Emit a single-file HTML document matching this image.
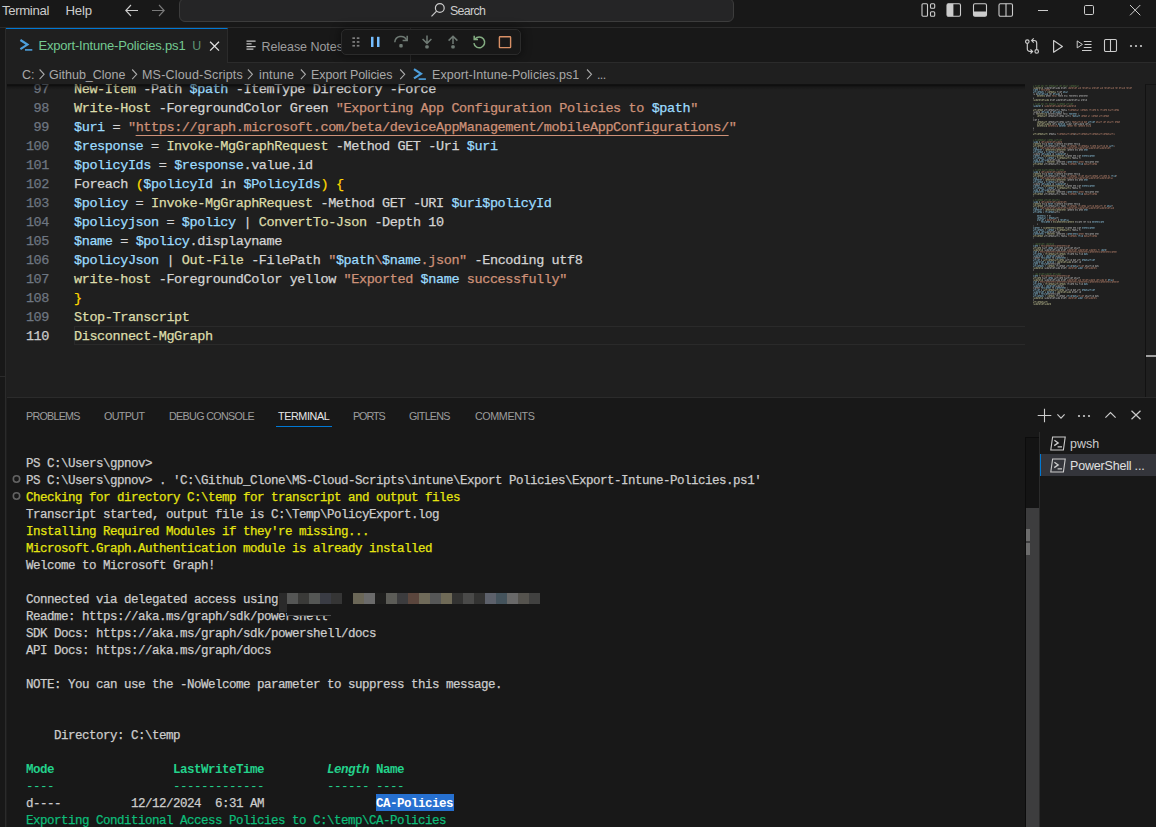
<!DOCTYPE html>
<html lang="en">
<head>
<meta charset="utf-8">
<title>Export-Intune-Policies.ps1 - Visual Studio Code</title>
<style>
*{box-sizing:border-box;margin:0;padding:0}
html,body{width:1156px;height:827px;overflow:hidden;background:#1f1f1f}
body{position:relative;font-family:"Liberation Sans",sans-serif;font-size:13px;color:#cccccc}
.abs{position:absolute}
svg{display:block;position:absolute;overflow:visible}
/* title bar */
#title{left:0;top:0;width:1156px;height:28px;background:#181818;border-bottom:1px solid #2b2b2b}
#title .menu{position:absolute;top:2.6px;font-size:13.2px;color:#cccccc;line-height:16px;white-space:nowrap}
#search{left:179px;top:-2px;width:555px;height:24px;border:1px solid #3c3c3c;border-radius:6px;background:#252526}
#search span{position:absolute;left:270px;top:4.5px;font-size:12.4px;color:#cccccc;line-height:14px}
/* left strip */
#strip{left:0;top:28px;width:6px;height:799px;background:#181818;border-right:1px solid #2b2b2b}
/* tabs */
#tabs{left:6px;top:28px;width:1150px;height:35px;background:#181818;border-bottom:1px solid #2b2b2b}
#tab1{left:0;top:0;width:222px;height:35px;background:#1f1f1f;border-top:1px solid #0078d4;border-right:1px solid #2b2b2b}
#tab1 .lbl{position:absolute;left:32.4px;top:9px;font-size:13px;line-height:16px;color:#73c991;white-space:nowrap}
#tab1 .u{position:absolute;left:186.2px;top:9px;font-size:12.4px;line-height:16px;color:#5d9474}
#tab2{left:222px;top:0;width:183px;height:34px;border-right:1px solid #2b2b2b}
#tab2 .lbl{position:absolute;left:33.5px;top:11px;font-size:12.5px;line-height:16px;color:#9d9d9d;white-space:nowrap}
#dbg{left:335px;top:1px;width:180px;height:26px;background:#181818;border:1px solid #2b2b2b;border-radius:5px;box-shadow:0 0 8px 2px rgba(0,0,0,.36)}
/* breadcrumbs */
#crumbs{left:7px;top:63px;width:1149px;height:21px;background:#1f1f1f;font-size:12.5px;color:#a9a9a9;white-space:nowrap}
#crumbs span{position:absolute;top:4px;line-height:16px}
#crumbs .chev{fill:none;stroke:#a9a9a9;stroke-width:1.1}
/* editor */
#editor{left:7px;top:84px;width:1149px;height:314px;background:#1f1f1f;overflow:hidden}
#editor .ln{position:absolute;left:0;width:42px;text-align:right;font-family:"Liberation Mono",monospace;font-size:13.5px;line-height:19px;color:#6e7681;letter-spacing:-0.4px}
#editor .cl{position:absolute;left:67px;font-family:"Liberation Mono",monospace;font-size:13.5px;line-height:19px;color:#d4d4d4;white-space:pre;letter-spacing:-0.4px}
.f{color:#dcdcaa}.v{color:#9cdcfe}.s{color:#ce9178}.b{color:#ffd700}
/* panel */
#panel{left:7px;top:397px;width:1149px;height:430px;background:#181818;border-top:1px solid #2b2b2b}
#panel .pt{position:absolute;top:11px;font-size:10.75px;line-height:14px;color:#9d9d9d;white-space:nowrap}
#term{position:absolute;z-index:0;left:19px;top:58px;font-family:"Liberation Mono",monospace;font-size:12.5px;line-height:17px;color:#cccccc;letter-spacing:-0.5px}
#term div{height:17px;white-space:pre}
.y{color:#e5e510}.g{color:#23d18b}.gn{color:#0dbc79}
#m1{letter-spacing:-0.36px}
#m2{letter-spacing:-0.16px}
#srch{letter-spacing:-0.68px}
#c3{letter-spacing:0.19px}
#c4{letter-spacing:0.16px}
#c5{letter-spacing:-0.09px}
#c6{letter-spacing:0.05px}
#c7{letter-spacing:-0.6px}
#p1{letter-spacing:-0.76px}
#p2{letter-spacing:-0.63px}
#p3{letter-spacing:-0.68px}
#p4{letter-spacing:-0.38px}
#p5{letter-spacing:-1.07px}
#p6{letter-spacing:-0.76px}
#p7{letter-spacing:-0.41px}
#t1{letter-spacing:-0.18px}
#t2{letter-spacing:-0.05px}
#blur i{position:absolute;top:0;width:11px;height:11px}
#blur b{position:absolute;display:block}
#tlist .row{position:absolute;left:0;width:116px;height:22px}
#tlist .row.sel{background:#34353b;border-left:1px solid #0078d4;left:0}
#tlist .row svg{left:10px;top:4px}
#tlist .row.sel svg{left:9px}
#tlist .row span{position:absolute;left:30px;top:4px;font-size:12.5px;line-height:16px;color:#cccccc;white-space:nowrap}
#tlist .row.sel span{left:29px;color:#e0e0e0}
.sel{}
#term .sel{position:relative;color:#ffffff;font-weight:bold}
#term .sel::before{content:"";position:absolute;left:0;right:-0.5px;top:-3.4px;height:17px;background:#2670d0;z-index:-1}
#term .g{font-weight:bold}
#curline{left:67px;top:242px;width:951px;height:19px;border:1px solid #2a2a2a;border-right:none}
#shadow{left:0;top:0;width:1018px;height:6px;background:linear-gradient(rgba(0,0,0,.3),rgba(0,0,0,.6) 1px,rgba(0,0,0,.25) 3px,rgba(0,0,0,0));z-index:5}
#editor .ln.cur{color:#cccccc}
.lk{text-decoration:underline;text-underline-offset:4px;text-decoration-thickness:1px}
#tl2{letter-spacing:-0.19px}
#editor .cl,#editor .ln,#term{-webkit-text-stroke:0.25px}
#term .g,#term .sel{-webkit-text-stroke:0}
#term .gd{font-weight:normal}
</style>
</head>
<body>
<div id="title" class="abs">
  <div class="menu" id="m1" style="left:2px">Terminal</div>
  <div class="menu" id="m2" style="left:65.5px">Help</div>
  <svg style="left:124px;top:3px" width="16" height="16" viewBox="0 0 16 16" fill="none" stroke="#cccccc" stroke-width="1.1"><path d="M14 7.5H2M7 2L1.8 7.5L7 13"/></svg>
  <svg style="left:150px;top:3px" width="16" height="16" viewBox="0 0 16 16" fill="none" stroke="#7a7a7a" stroke-width="1.1"><path d="M2 7.5H14M9 2L14.2 7.5L9 13"/></svg>
  <div id="search" class="abs"><svg style="left:250px;top:3px" width="16" height="16" viewBox="0 0 16 16" fill="none" stroke="#cccccc" stroke-width="1.2"><circle cx="9.8" cy="6" r="4.4"/><path d="M6.6 9.2L1.5 14.3"/></svg><span id="srch">Search</span></div>
  <!-- layout controls -->
  <svg style="left:921px;top:3px" width="16" height="15" viewBox="0 0 16 15" fill="none" stroke="#cccccc" stroke-width="1.1"><rect x="1" y="0.8" width="5.5" height="12.4" rx="1"/><rect x="9.5" y="0.8" width="4.2" height="4.4" rx="1"/><rect x="9.5" y="8.8" width="4.2" height="4.4" rx="1"/></svg>
  <svg style="left:946px;top:3px" width="16" height="15" viewBox="0 0 16 15"><rect x="1" y="0.8" width="13.5" height="12.4" rx="1.4" fill="none" stroke="#cccccc" stroke-width="1.1"/><path d="M1 2.2A1.4 1.4 0 0 1 2.4 0.8H7.4V13.2H2.4A1.4 1.4 0 0 1 1 11.8Z" fill="#cccccc"/></svg>
  <svg style="left:972px;top:3px" width="16" height="15" viewBox="0 0 16 15"><rect x="1.5" y="0.8" width="13" height="12.4" rx="1.4" fill="none" stroke="#cccccc" stroke-width="1.1"/><path d="M1.5 8.4H14.5V11.8A1.4 1.4 0 0 1 13.1 13.2H2.9A1.4 1.4 0 0 1 1.5 11.8Z" fill="#cccccc"/></svg>
  <svg style="left:998px;top:3px" width="16" height="15" viewBox="0 0 16 15" fill="none" stroke="#cccccc" stroke-width="1.1"><rect x="1" y="0.8" width="13.5" height="12.4" rx="1.4"/><path d="M8 0.8V13.2"/></svg>
  <svg style="left:1037px;top:5px" width="12" height="12" viewBox="0 0 12 12" stroke="#cccccc" stroke-width="1"><path d="M1 5.5H11"/></svg>
  <svg style="left:1083px;top:4px" width="12" height="12" viewBox="0 0 12 12" fill="none" stroke="#cccccc" stroke-width="1"><rect x="1.5" y="1.5" width="9" height="9" rx="1.2"/></svg>
  <svg style="left:1129px;top:4px" width="12" height="12" viewBox="0 0 12 12" fill="none" stroke="#cccccc" stroke-width="1"><path d="M1 1L11.3 11.3M11.3 1L1 11.3"/></svg>
</div>
<div id="strip" class="abs"><div class="abs" style="left:0;top:348px;width:5px;height:1px;background:#2b2b2b"></div></div>
<div id="tabs" class="abs">
  <div id="tab1" class="abs">
    <svg style="left:13px;top:9px" width="15" height="14" viewBox="0 0 15 14" fill="none" stroke="#4d9fdc" stroke-width="2.2"><path d="M1.4 2L8.4 6.6L1.4 11.2"/><path d="M6 11.9H13.3" stroke-width="1.6"/></svg>
    <div class="lbl" id="t1">Export-Intune-Policies.ps1</div><div class="u" id="t1u">U</div>
    <svg style="left:203px;top:12px" width="11" height="11" viewBox="0 0 11 11" fill="none" stroke="#e0e0e0" stroke-width="1.3"><path d="M1.1 0.7L10 9.6M10 0.7L1.1 9.6"/></svg>
  </div>
  <div id="tab2" class="abs">
    <svg style="left:18px;top:12px" width="11" height="11" viewBox="0 0 11 11" stroke="#c5c5c5" stroke-width="1.3"><path d="M0.5 1.2H9.6M0.5 3.9H5.6M0.5 6.6H9.6M0.5 9.2H7.4"/></svg>
    <div class="lbl" id="t2">Release Notes</div>
  </div>
  <div id="dbg" class="abs">
    <svg style="left:10px;top:6px" width="8" height="11" viewBox="0 0 8 11" fill="#7f7f7f"><g transform="translate(0.0 0.5)"><rect x="0.4" y="0.8" width="2.6" height="1.7"/><rect x="4.8" y="0.8" width="2.6" height="1.7"/><rect x="0.4" y="4.6" width="2.6" height="1.7"/><rect x="4.8" y="4.6" width="2.6" height="1.7"/><rect x="0.4" y="8.4" width="2.6" height="1.7"/><rect x="4.8" y="8.4" width="2.6" height="1.7"/></g></svg>
    <svg style="left:28px;top:6px" width="11" height="12" viewBox="0 0 11 12" fill="#75beff"><rect x="1" y="0.8" width="2.5" height="10.2"/><rect x="7" y="0.8" width="2.5" height="10.2"/></svg>
    <svg style="left:51px;top:4px" width="16" height="16" viewBox="0 0 16 16" fill="none" stroke="#6f7a74" stroke-width="1.5"><path d="M1.8 8.2A6.2 6.2 0 0 1 13.6 6"/><path d="M14.2 1.8V6.4H9.6"/><rect x="6.3" y="10" width="3.4" height="3.4" rx="1" fill="#6f7a74" stroke="none"/></svg>
    <svg style="left:77px;top:4px" width="16" height="16" viewBox="0 0 16 16" fill="none" stroke="#6f7a74" stroke-width="1.5"><path d="M8 1.6V9M3.6 5L8 9.4L12.4 5"/><rect x="6.3" y="11.2" width="3.4" height="3.4" rx="1" fill="#6f7a74" stroke="none"/></svg>
    <svg style="left:103px;top:4px" width="16" height="16" viewBox="0 0 16 16" fill="none" stroke="#6f7a74" stroke-width="1.5"><path d="M8 10V2.6M3.6 6.6L8 2.2L12.4 6.6"/><rect x="6.3" y="11.2" width="3.4" height="3.4" rx="1" fill="#6f7a74" stroke="none"/></svg>
    <svg style="left:129px;top:4px" width="16" height="16" viewBox="0 0 16 16" fill="none" stroke="#84ad82" stroke-width="1.5"><path d="M4 5A5.4 5.4 0 1 1 2.9 9.2"/><path d="M3.2 1.8V5.6H7"/></svg>
    <svg style="left:155px;top:4px" width="16" height="16" viewBox="0 0 16 16" fill="none" stroke="#d89066" stroke-width="1.4"><rect x="2.4" y="2.8" width="11.2" height="10.8" rx="0.6"/></svg>
  </div>
  <!-- editor actions -->
  <svg style="left:1019px;top:10px" width="16" height="16" viewBox="0 0 16 16" fill="none" stroke="#cccccc" stroke-width="1.15"><circle cx="2.3" cy="3.6" r="1.75"/><circle cx="11.7" cy="13.4" r="1.75"/><path d="M2.3 5.4V10.9A2.5 2.5 0 0 0 4.8 13.4H7.4M5.5 11.3L7.6 13.4L5.5 15.5"/><path d="M11.7 11.6V5A2.5 2.5 0 0 0 9.2 2.5H6.8M8.7 0.4L6.6 2.5L8.7 4.6"/></svg>
  <svg style="left:1045px;top:10px" width="14" height="16" viewBox="0 0 14 16" fill="none" stroke="#cccccc" stroke-width="1.2" stroke-linejoin="round"><path d="M2.6 2.6L11.4 8.4L2.6 14.2Z"/></svg>
  <svg style="left:1070px;top:10px" width="16" height="16" viewBox="0 0 16 16" fill="none" stroke="#cccccc" stroke-width="1"><path d="M1.2 2.9L6.4 6.4L1.2 9.9Z" stroke-linejoin="round"/><path d="M7.8 3.5H15.5M8.6 6.5H15.5M7.8 9.5H15.5M6 12.5H15.5"/></svg>
  <svg style="left:1097px;top:10px" width="15" height="15" viewBox="0 0 15 15" fill="none" stroke="#cccccc" stroke-width="1.1"><rect x="1.5" y="1.5" width="12" height="12" rx="1.2"/><path d="M7.5 1.5V13.5"/></svg>
  <svg style="left:1123px;top:16px" width="14" height="4" viewBox="0 0 14 4" fill="#cccccc"><circle cx="2" cy="2" r="1.1"/><circle cx="7" cy="2" r="1.1"/><circle cx="12" cy="2" r="1.1"/></svg>
</div>
<div id="crumbs" class="abs">
  <span id="c1" style="left:15px">C:</span>
  <span id="c2" style="left:42px">Github_Clone</span>
  <span id="c3" style="left:135px">MS-Cloud-Scripts</span>
  <span id="c4" style="left:252px">intune</span>
  <span id="c5" style="left:304px">Export Policies</span>
  <span id="c6" style="left:425px">Export-Intune-Policies.ps1</span>
  <span id="c7" style="left:590px">...</span>
  <svg class="chev" style="left:31px;top:5px" width="6" height="11" viewBox="0 0 6 11"><g transform="translate(0.9 0.8)"><path d="M0.7 0.7L5.2 5.5L0.7 10.3"/></g></svg>
  <svg class="chev" style="left:124px;top:5px" width="6" height="11" viewBox="0 0 6 11"><g transform="translate(0.5 0.8)"><path d="M0.7 0.7L5.2 5.5L0.7 10.3"/></g></svg>
  <svg class="chev" style="left:240px;top:5px" width="6" height="11" viewBox="0 0 6 11"><g transform="translate(0.2 0.8)"><path d="M0.7 0.7L5.2 5.5L0.7 10.3"/></g></svg>
  <svg class="chev" style="left:293px;top:5px" width="6" height="11" viewBox="0 0 6 11"><g transform="translate(0.2 0.8)"><path d="M0.7 0.7L5.2 5.5L0.7 10.3"/></g></svg>
  <svg class="chev" style="left:392px;top:5px" width="6" height="11" viewBox="0 0 6 11"><g transform="translate(0.5 0.8)"><path d="M0.7 0.7L5.2 5.5L0.7 10.3"/></g></svg>
  <svg class="chev" style="left:579px;top:5px" width="6" height="11" viewBox="0 0 6 11"><g transform="translate(0.3 0.8)"><path d="M0.7 0.7L5.2 5.5L0.7 10.3"/></g></svg>
  <svg style="left:405px;top:4px" width="15" height="14" viewBox="0 0 15 14" fill="none" stroke="#4d9fdc" stroke-width="2.2"><g transform="translate(0.6 0.2)"><path d="M1.4 2L8.4 6.6L1.4 11.2"/><path d="M6 11.9H13.3" stroke-width="1.6"/></g></svg>
</div>
<div id="editor" class="abs">
<div id="curline" class="abs"></div>
<div id="shadow" class="abs"></div>
<svg id="mm" style="left:1026px;top:0px" width="120" height="230" viewBox="0 0 120 230" opacity="1" shape-rendering="crispEdges"><defs><pattern id="tx" width="11" height="6" patternUnits="userSpaceOnUse"><g fill="#1f1f1f"><rect x="0" y="0" width="1" height="1" fill-opacity="0.3"/><rect x="1" y="0" width="1" height="1" fill-opacity="0.6"/><rect x="3" y="0" width="1" height="1" fill-opacity="0.6"/><rect x="4" y="0" width="1" height="1" fill-opacity="0.3"/><rect x="5" y="0" width="1" height="1" fill-opacity="0.3"/><rect x="6" y="0" width="1" height="1" fill-opacity="0.6"/><rect x="7" y="0" width="1" height="1" fill-opacity="0.3"/><rect x="8" y="0" width="1" height="1" fill-opacity="0.6"/><rect x="9" y="0" width="1" height="1" fill-opacity="0.3"/><rect x="10" y="0" width="1" height="1" fill-opacity="0.6"/><rect x="0" y="1" width="1" height="1" fill-opacity="0.6"/><rect x="1" y="1" width="1" height="1" fill-opacity="0.3"/><rect x="3" y="1" width="1" height="1" fill-opacity="0.6"/><rect x="4" y="1" width="1" height="1" fill-opacity="0.6"/><rect x="8" y="1" width="1" height="1" fill-opacity="0.3"/><rect x="10" y="1" width="1" height="1" fill-opacity="0.6"/><rect x="1" y="2" width="1" height="1" fill-opacity="0.6"/><rect x="2" y="2" width="1" height="1" fill-opacity="0.6"/><rect x="3" y="2" width="1" height="1" fill-opacity="0.6"/><rect x="4" y="2" width="1" height="1" fill-opacity="0.3"/><rect x="6" y="2" width="1" height="1" fill-opacity="0.6"/><rect x="9" y="2" width="1" height="1" fill-opacity="0.3"/><rect x="10" y="2" width="1" height="1" fill-opacity="0.3"/><rect x="0" y="3" width="1" height="1" fill-opacity="0.6"/><rect x="1" y="3" width="1" height="1" fill-opacity="0.6"/><rect x="2" y="3" width="1" height="1" fill-opacity="0.6"/><rect x="4" y="3" width="1" height="1" fill-opacity="0.3"/><rect x="5" y="3" width="1" height="1" fill-opacity="0.3"/><rect x="7" y="3" width="1" height="1" fill-opacity="0.3"/><rect x="8" y="3" width="1" height="1" fill-opacity="0.6"/><rect x="0" y="4" width="1" height="1" fill-opacity="0.6"/><rect x="2" y="4" width="1" height="1" fill-opacity="0.3"/><rect x="5" y="4" width="1" height="1" fill-opacity="0.6"/><rect x="7" y="4" width="1" height="1" fill-opacity="0.6"/><rect x="8" y="4" width="1" height="1" fill-opacity="0.3"/><rect x="10" y="4" width="1" height="1" fill-opacity="0.6"/><rect x="0" y="5" width="1" height="1" fill-opacity="0.3"/><rect x="1" y="5" width="1" height="1" fill-opacity="0.6"/><rect x="6" y="5" width="1" height="1" fill-opacity="0.3"/><rect x="10" y="5" width="1" height="1" fill-opacity="0.3"/></g></pattern></defs><g opacity="0.4"><rect x="0" y="1" width="1" height="2" fill="#52773f"/><rect x="2" y="1" width="5" height="2" fill="#52773f"/><rect x="8" y="1" width="3" height="2" fill="#52773f"/><rect x="12" y="1" width="3" height="2" fill="#52773f"/><rect x="16" y="1" width="9" height="2" fill="#52773f"/><rect x="26" y="1" width="3" height="2" fill="#52773f"/><rect x="30" y="1" width="5" height="2" fill="#52773f"/><rect x="36" y="1" width="10" height="2" fill="#52773f"/><rect x="0" y="3" width="10" height="2" fill="#dcdcaa"/><rect x="11" y="3" width="16" height="2" fill="#d4d4d4"/><rect x="28" y="3" width="6" height="2" fill="#d4d4d4"/><rect x="35" y="3" width="9" height="2" fill="#ce9178"/><rect x="45" y="3" width="3" height="2" fill="#ce9178"/><rect x="49" y="3" width="9" height="2" fill="#ce9178"/><rect x="59" y="3" width="7" height="2" fill="#ce9178"/><rect x="67" y="3" width="3" height="2" fill="#ce9178"/><rect x="71" y="3" width="10" height="2" fill="#ce9178"/><rect x="82" y="3" width="3" height="2" fill="#ce9178"/><rect x="86" y="3" width="6" height="2" fill="#ce9178"/><rect x="93" y="3" width="6" height="2" fill="#ce9178"/><rect x="0" y="5" width="5" height="2" fill="#9cdcfe"/><rect x="6" y="5" width="1" height="2" fill="#d4d4d4"/><rect x="8" y="5" width="9" height="2" fill="#ce9178"/><rect x="0" y="7" width="11" height="2" fill="#9cdcfe"/><rect x="12" y="7" width="1" height="2" fill="#d4d4d4"/><rect x="14" y="7" width="9" height="2" fill="#dcdcaa"/><rect x="24" y="7" width="5" height="2" fill="#d4d4d4"/><rect x="30" y="7" width="5" height="2" fill="#9cdcfe"/><rect x="0" y="9" width="2" height="2" fill="#d4d4d4"/><rect x="3" y="9" width="1" height="2" fill="#d4d4d4"/><rect x="4" y="9" width="11" height="2" fill="#9cdcfe"/><rect x="16" y="9" width="3" height="2" fill="#d4d4d4"/><rect x="20" y="9" width="6" height="2" fill="#9cdcfe"/><rect x="26" y="9" width="1" height="2" fill="#d4d4d4"/><rect x="28" y="9" width="1" height="2" fill="#d4d4d4"/><rect x="4" y="11" width="8" height="2" fill="#dcdcaa"/><rect x="13" y="11" width="5" height="2" fill="#d4d4d4"/><rect x="19" y="11" width="5" height="2" fill="#ce9178"/><rect x="25" y="11" width="5" height="2" fill="#d4d4d4"/><rect x="31" y="11" width="4" height="2" fill="#d4d4d4"/><rect x="36" y="11" width="9" height="2" fill="#d4d4d4"/><rect x="46" y="11" width="9" height="2" fill="#d4d4d4"/><rect x="0" y="13" width="1" height="2" fill="#d4d4d4"/><rect x="0" y="15" width="16" height="2" fill="#dcdcaa"/><rect x="17" y="15" width="5" height="2" fill="#d4d4d4"/><rect x="23" y="15" width="24" height="2" fill="#d4d4d4"/><rect x="48" y="15" width="6" height="2" fill="#d4d4d4"/><rect x="0" y="19" width="1" height="2" fill="#52773f"/><rect x="2" y="19" width="5" height="2" fill="#52773f"/><rect x="8" y="19" width="3" height="2" fill="#52773f"/><rect x="12" y="19" width="3" height="2" fill="#52773f"/><rect x="16" y="19" width="7" height="2" fill="#52773f"/><rect x="24" y="19" width="8" height="2" fill="#52773f"/><rect x="33" y="19" width="7" height="2" fill="#52773f"/><rect x="0" y="21" width="8" height="2" fill="#9cdcfe"/><rect x="9" y="21" width="1" height="2" fill="#d4d4d4"/><rect x="11" y="21" width="32" height="2" fill="#ce9178"/><rect x="0" y="25" width="10" height="2" fill="#dcdcaa"/><rect x="11" y="25" width="16" height="2" fill="#d4d4d4"/><rect x="28" y="25" width="6" height="2" fill="#d4d4d4"/><rect x="35" y="25" width="11" height="2" fill="#ce9178"/><rect x="47" y="25" width="8" height="2" fill="#ce9178"/><rect x="56" y="25" width="7" height="2" fill="#ce9178"/><rect x="64" y="25" width="2" height="2" fill="#ce9178"/><rect x="67" y="25" width="7" height="2" fill="#ce9178"/><rect x="75" y="25" width="11" height="2" fill="#ce9178"/><rect x="0" y="27" width="7" height="2" fill="#d4d4d4"/><rect x="8" y="27" width="1" height="2" fill="#d4d4d4"/><rect x="9" y="27" width="7" height="2" fill="#9cdcfe"/><rect x="17" y="27" width="2" height="2" fill="#d4d4d4"/><rect x="20" y="27" width="8" height="2" fill="#9cdcfe"/><rect x="28" y="27" width="1" height="2" fill="#d4d4d4"/><rect x="30" y="27" width="1" height="2" fill="#d4d4d4"/><rect x="0" y="29" width="2" height="2" fill="#d4d4d4"/><rect x="3" y="29" width="1" height="2" fill="#d4d4d4"/><rect x="4" y="29" width="10" height="2" fill="#dcdcaa"/><rect x="15" y="29" width="14" height="2" fill="#d4d4d4"/><rect x="30" y="29" width="5" height="2" fill="#d4d4d4"/><rect x="36" y="29" width="7" height="2" fill="#9cdcfe"/><rect x="43" y="29" width="1" height="2" fill="#d4d4d4"/><rect x="45" y="29" width="1" height="2" fill="#d4d4d4"/><rect x="4" y="31" width="10" height="2" fill="#dcdcaa"/><rect x="15" y="31" width="16" height="2" fill="#d4d4d4"/><rect x="32" y="31" width="6" height="2" fill="#d4d4d4"/><rect x="39" y="31" width="1" height="2" fill="#ce9178"/><rect x="40" y="31" width="7" height="2" fill="#9cdcfe"/><rect x="48" y="31" width="6" height="2" fill="#ce9178"/><rect x="55" y="31" width="2" height="2" fill="#ce9178"/><rect x="58" y="31" width="7" height="2" fill="#ce9178"/><rect x="66" y="31" width="10" height="2" fill="#ce9178"/><rect x="0" y="33" width="1" height="2" fill="#d4d4d4"/><rect x="0" y="35" width="4" height="2" fill="#d4d4d4"/><rect x="5" y="35" width="1" height="2" fill="#d4d4d4"/><rect x="4" y="37" width="10" height="2" fill="#dcdcaa"/><rect x="15" y="37" width="16" height="2" fill="#d4d4d4"/><rect x="32" y="37" width="6" height="2" fill="#d4d4d4"/><rect x="39" y="37" width="11" height="2" fill="#ce9178"/><rect x="51" y="37" width="3" height="2" fill="#ce9178"/><rect x="55" y="37" width="7" height="2" fill="#9cdcfe"/><rect x="63" y="37" width="6" height="2" fill="#ce9178"/><rect x="70" y="37" width="3" height="2" fill="#ce9178"/><rect x="74" y="37" width="7" height="2" fill="#ce9178"/><rect x="82" y="37" width="5" height="2" fill="#ce9178"/><rect x="4" y="39" width="14" height="2" fill="#dcdcaa"/><rect x="19" y="39" width="5" height="2" fill="#d4d4d4"/><rect x="25" y="39" width="7" height="2" fill="#9cdcfe"/><rect x="33" y="39" width="6" height="2" fill="#d4d4d4"/><rect x="40" y="39" width="11" height="2" fill="#d4d4d4"/><rect x="52" y="39" width="6" height="2" fill="#d4d4d4"/><rect x="4" y="41" width="10" height="2" fill="#dcdcaa"/><rect x="15" y="41" width="10" height="2" fill="#ce9178"/><rect x="26" y="41" width="7" height="2" fill="#9cdcfe"/><rect x="34" y="41" width="6" height="2" fill="#ce9178"/><rect x="41" y="41" width="3" height="2" fill="#ce9178"/><rect x="45" y="41" width="7" height="2" fill="#ce9178"/><rect x="53" y="41" width="5" height="2" fill="#ce9178"/><rect x="0" y="43" width="1" height="2" fill="#d4d4d4"/><rect x="0" y="45" width="1" height="2" fill="#d4d4d4"/><rect x="0" y="49" width="15" height="2" fill="#dcdcaa"/><rect x="16" y="49" width="7" height="2" fill="#d4d4d4"/><rect x="24" y="49" width="17" height="2" fill="#ce9178"/><rect x="41" y="49" width="1" height="2" fill="#d4d4d4"/><rect x="42" y="49" width="40" height="2" fill="#ce9178"/><rect x="0" y="55" width="1" height="2" fill="#52773f"/><rect x="2" y="55" width="11" height="2" fill="#52773f"/><rect x="14" y="55" width="6" height="2" fill="#52773f"/><rect x="21" y="55" width="8" height="2" fill="#52773f"/><rect x="0" y="57" width="5" height="2" fill="#9cdcfe"/><rect x="6" y="57" width="1" height="2" fill="#d4d4d4"/><rect x="8" y="57" width="21" height="2" fill="#ce9178"/><rect x="0" y="59" width="8" height="2" fill="#dcdcaa"/><rect x="9" y="59" width="5" height="2" fill="#d4d4d4"/><rect x="15" y="59" width="5" height="2" fill="#9cdcfe"/><rect x="21" y="59" width="9" height="2" fill="#d4d4d4"/><rect x="31" y="59" width="9" height="2" fill="#d4d4d4"/><rect x="41" y="59" width="6" height="2" fill="#d4d4d4"/><rect x="0" y="61" width="10" height="2" fill="#dcdcaa"/><rect x="11" y="61" width="16" height="2" fill="#d4d4d4"/><rect x="28" y="61" width="5" height="2" fill="#d4d4d4"/><rect x="34" y="61" width="10" height="2" fill="#ce9178"/><rect x="45" y="61" width="11" height="2" fill="#ce9178"/><rect x="57" y="61" width="6" height="2" fill="#ce9178"/><rect x="64" y="61" width="8" height="2" fill="#ce9178"/><rect x="73" y="61" width="2" height="2" fill="#ce9178"/><rect x="76" y="61" width="5" height="2" fill="#9cdcfe"/><rect x="81" y="61" width="1" height="2" fill="#ce9178"/><rect x="0" y="63" width="4" height="2" fill="#9cdcfe"/><rect x="5" y="63" width="1" height="2" fill="#d4d4d4"/><rect x="7" y="63" width="71" height="2" fill="#ce9178"/><rect x="0" y="65" width="9" height="2" fill="#9cdcfe"/><rect x="10" y="65" width="1" height="2" fill="#d4d4d4"/><rect x="12" y="65" width="21" height="2" fill="#dcdcaa"/><rect x="34" y="65" width="7" height="2" fill="#d4d4d4"/><rect x="42" y="65" width="3" height="2" fill="#d4d4d4"/><rect x="46" y="65" width="4" height="2" fill="#d4d4d4"/><rect x="51" y="65" width="4" height="2" fill="#9cdcfe"/><rect x="0" y="67" width="10" height="2" fill="#9cdcfe"/><rect x="11" y="67" width="1" height="2" fill="#d4d4d4"/><rect x="13" y="67" width="9" height="2" fill="#9cdcfe"/><rect x="22" y="67" width="9" height="2" fill="#d4d4d4"/><rect x="0" y="69" width="7" height="2" fill="#d4d4d4"/><rect x="8" y="69" width="1" height="2" fill="#d4d4d4"/><rect x="9" y="69" width="9" height="2" fill="#9cdcfe"/><rect x="19" y="69" width="2" height="2" fill="#d4d4d4"/><rect x="22" y="69" width="10" height="2" fill="#9cdcfe"/><rect x="32" y="69" width="1" height="2" fill="#d4d4d4"/><rect x="34" y="69" width="1" height="2" fill="#d4d4d4"/><rect x="0" y="71" width="7" height="2" fill="#9cdcfe"/><rect x="8" y="71" width="1" height="2" fill="#d4d4d4"/><rect x="10" y="71" width="21" height="2" fill="#dcdcaa"/><rect x="32" y="71" width="7" height="2" fill="#d4d4d4"/><rect x="40" y="71" width="3" height="2" fill="#d4d4d4"/><rect x="44" y="71" width="4" height="2" fill="#d4d4d4"/><rect x="49" y="71" width="13" height="2" fill="#9cdcfe"/><rect x="0" y="73" width="11" height="2" fill="#9cdcfe"/><rect x="12" y="73" width="1" height="2" fill="#d4d4d4"/><rect x="14" y="73" width="7" height="2" fill="#9cdcfe"/><rect x="22" y="73" width="1" height="2" fill="#d4d4d4"/><rect x="24" y="73" width="14" height="2" fill="#dcdcaa"/><rect x="39" y="73" width="6" height="2" fill="#d4d4d4"/><rect x="46" y="73" width="2" height="2" fill="#d4d4d4"/><rect x="0" y="75" width="5" height="2" fill="#9cdcfe"/><rect x="6" y="75" width="1" height="2" fill="#d4d4d4"/><rect x="8" y="75" width="7" height="2" fill="#9cdcfe"/><rect x="15" y="75" width="12" height="2" fill="#d4d4d4"/><rect x="0" y="77" width="11" height="2" fill="#9cdcfe"/><rect x="12" y="77" width="1" height="2" fill="#d4d4d4"/><rect x="14" y="77" width="8" height="2" fill="#dcdcaa"/><rect x="23" y="77" width="9" height="2" fill="#d4d4d4"/><rect x="33" y="77" width="1" height="2" fill="#ce9178"/><rect x="34" y="77" width="5" height="2" fill="#9cdcfe"/><rect x="39" y="77" width="1" height="2" fill="#ce9178"/><rect x="40" y="77" width="5" height="2" fill="#9cdcfe"/><rect x="45" y="77" width="6" height="2" fill="#ce9178"/><rect x="52" y="77" width="9" height="2" fill="#d4d4d4"/><rect x="62" y="77" width="4" height="2" fill="#d4d4d4"/><rect x="0" y="79" width="10" height="2" fill="#dcdcaa"/><rect x="11" y="79" width="16" height="2" fill="#d4d4d4"/><rect x="28" y="79" width="6" height="2" fill="#d4d4d4"/><rect x="35" y="79" width="9" height="2" fill="#ce9178"/><rect x="45" y="79" width="5" height="2" fill="#9cdcfe"/><rect x="51" y="79" width="13" height="2" fill="#ce9178"/><rect x="0" y="81" width="1" height="2" fill="#d4d4d4"/><rect x="0" y="85" width="1" height="2" fill="#52773f"/><rect x="2" y="85" width="6" height="2" fill="#52773f"/><rect x="9" y="85" width="13" height="2" fill="#52773f"/><rect x="23" y="85" width="8" height="2" fill="#52773f"/><rect x="0" y="87" width="5" height="2" fill="#9cdcfe"/><rect x="6" y="87" width="1" height="2" fill="#d4d4d4"/><rect x="8" y="87" width="25" height="2" fill="#ce9178"/><rect x="0" y="89" width="8" height="2" fill="#dcdcaa"/><rect x="9" y="89" width="5" height="2" fill="#d4d4d4"/><rect x="15" y="89" width="5" height="2" fill="#9cdcfe"/><rect x="21" y="89" width="9" height="2" fill="#d4d4d4"/><rect x="31" y="89" width="9" height="2" fill="#d4d4d4"/><rect x="41" y="89" width="6" height="2" fill="#d4d4d4"/><rect x="0" y="91" width="10" height="2" fill="#dcdcaa"/><rect x="11" y="91" width="16" height="2" fill="#d4d4d4"/><rect x="28" y="91" width="5" height="2" fill="#d4d4d4"/><rect x="34" y="91" width="10" height="2" fill="#ce9178"/><rect x="45" y="91" width="6" height="2" fill="#ce9178"/><rect x="52" y="91" width="13" height="2" fill="#ce9178"/><rect x="66" y="91" width="8" height="2" fill="#ce9178"/><rect x="75" y="91" width="2" height="2" fill="#ce9178"/><rect x="78" y="91" width="5" height="2" fill="#9cdcfe"/><rect x="83" y="91" width="1" height="2" fill="#ce9178"/><rect x="0" y="93" width="4" height="2" fill="#9cdcfe"/><rect x="5" y="93" width="1" height="2" fill="#d4d4d4"/><rect x="7" y="93" width="73" height="2" fill="#ce9178"/><rect x="0" y="95" width="9" height="2" fill="#9cdcfe"/><rect x="10" y="95" width="1" height="2" fill="#d4d4d4"/><rect x="12" y="95" width="21" height="2" fill="#dcdcaa"/><rect x="34" y="95" width="7" height="2" fill="#d4d4d4"/><rect x="42" y="95" width="3" height="2" fill="#d4d4d4"/><rect x="46" y="95" width="4" height="2" fill="#d4d4d4"/><rect x="51" y="95" width="4" height="2" fill="#9cdcfe"/><rect x="0" y="97" width="10" height="2" fill="#9cdcfe"/><rect x="11" y="97" width="1" height="2" fill="#d4d4d4"/><rect x="13" y="97" width="9" height="2" fill="#9cdcfe"/><rect x="22" y="97" width="9" height="2" fill="#d4d4d4"/><rect x="0" y="99" width="7" height="2" fill="#d4d4d4"/><rect x="8" y="99" width="1" height="2" fill="#d4d4d4"/><rect x="9" y="99" width="9" height="2" fill="#9cdcfe"/><rect x="19" y="99" width="2" height="2" fill="#d4d4d4"/><rect x="22" y="99" width="10" height="2" fill="#9cdcfe"/><rect x="32" y="99" width="1" height="2" fill="#d4d4d4"/><rect x="34" y="99" width="1" height="2" fill="#d4d4d4"/><rect x="0" y="101" width="7" height="2" fill="#9cdcfe"/><rect x="8" y="101" width="1" height="2" fill="#d4d4d4"/><rect x="10" y="101" width="21" height="2" fill="#dcdcaa"/><rect x="32" y="101" width="7" height="2" fill="#d4d4d4"/><rect x="40" y="101" width="3" height="2" fill="#d4d4d4"/><rect x="44" y="101" width="4" height="2" fill="#d4d4d4"/><rect x="49" y="101" width="13" height="2" fill="#9cdcfe"/><rect x="0" y="103" width="11" height="2" fill="#9cdcfe"/><rect x="12" y="103" width="1" height="2" fill="#d4d4d4"/><rect x="14" y="103" width="7" height="2" fill="#9cdcfe"/><rect x="22" y="103" width="1" height="2" fill="#d4d4d4"/><rect x="24" y="103" width="14" height="2" fill="#dcdcaa"/><rect x="39" y="103" width="6" height="2" fill="#d4d4d4"/><rect x="46" y="103" width="2" height="2" fill="#d4d4d4"/><rect x="0" y="105" width="5" height="2" fill="#9cdcfe"/><rect x="6" y="105" width="1" height="2" fill="#d4d4d4"/><rect x="8" y="105" width="7" height="2" fill="#9cdcfe"/><rect x="15" y="105" width="12" height="2" fill="#d4d4d4"/><rect x="0" y="107" width="11" height="2" fill="#9cdcfe"/><rect x="12" y="107" width="1" height="2" fill="#d4d4d4"/><rect x="14" y="107" width="8" height="2" fill="#dcdcaa"/><rect x="23" y="107" width="9" height="2" fill="#d4d4d4"/><rect x="33" y="107" width="1" height="2" fill="#ce9178"/><rect x="34" y="107" width="5" height="2" fill="#9cdcfe"/><rect x="39" y="107" width="1" height="2" fill="#ce9178"/><rect x="40" y="107" width="5" height="2" fill="#9cdcfe"/><rect x="45" y="107" width="6" height="2" fill="#ce9178"/><rect x="52" y="107" width="9" height="2" fill="#d4d4d4"/><rect x="62" y="107" width="4" height="2" fill="#d4d4d4"/><rect x="0" y="109" width="10" height="2" fill="#dcdcaa"/><rect x="11" y="109" width="16" height="2" fill="#d4d4d4"/><rect x="28" y="109" width="6" height="2" fill="#d4d4d4"/><rect x="35" y="109" width="9" height="2" fill="#ce9178"/><rect x="45" y="109" width="5" height="2" fill="#9cdcfe"/><rect x="51" y="109" width="13" height="2" fill="#ce9178"/><rect x="0" y="111" width="1" height="2" fill="#d4d4d4"/><rect x="0" y="115" width="1" height="2" fill="#52773f"/><rect x="2" y="115" width="8" height="2" fill="#52773f"/><rect x="11" y="115" width="7" height="2" fill="#52773f"/><rect x="19" y="115" width="8" height="2" fill="#52773f"/><rect x="0" y="117" width="5" height="2" fill="#9cdcfe"/><rect x="6" y="117" width="1" height="2" fill="#d4d4d4"/><rect x="8" y="117" width="26" height="2" fill="#ce9178"/><rect x="0" y="119" width="8" height="2" fill="#dcdcaa"/><rect x="9" y="119" width="5" height="2" fill="#d4d4d4"/><rect x="15" y="119" width="5" height="2" fill="#9cdcfe"/><rect x="21" y="119" width="9" height="2" fill="#d4d4d4"/><rect x="31" y="119" width="9" height="2" fill="#d4d4d4"/><rect x="41" y="119" width="6" height="2" fill="#d4d4d4"/><rect x="0" y="121" width="10" height="2" fill="#dcdcaa"/><rect x="11" y="121" width="16" height="2" fill="#d4d4d4"/><rect x="28" y="121" width="5" height="2" fill="#d4d4d4"/><rect x="34" y="121" width="10" height="2" fill="#ce9178"/><rect x="45" y="121" width="8" height="2" fill="#ce9178"/><rect x="54" y="121" width="7" height="2" fill="#ce9178"/><rect x="62" y="121" width="8" height="2" fill="#ce9178"/><rect x="71" y="121" width="2" height="2" fill="#ce9178"/><rect x="74" y="121" width="5" height="2" fill="#9cdcfe"/><rect x="79" y="121" width="1" height="2" fill="#ce9178"/><rect x="0" y="123" width="4" height="2" fill="#9cdcfe"/><rect x="5" y="123" width="1" height="2" fill="#d4d4d4"/><rect x="7" y="123" width="74" height="2" fill="#ce9178"/><rect x="0" y="125" width="9" height="2" fill="#9cdcfe"/><rect x="10" y="125" width="1" height="2" fill="#d4d4d4"/><rect x="12" y="125" width="21" height="2" fill="#dcdcaa"/><rect x="34" y="125" width="7" height="2" fill="#d4d4d4"/><rect x="42" y="125" width="3" height="2" fill="#d4d4d4"/><rect x="46" y="125" width="4" height="2" fill="#d4d4d4"/><rect x="51" y="125" width="4" height="2" fill="#9cdcfe"/><rect x="0" y="127" width="9" height="2" fill="#9cdcfe"/><rect x="10" y="127" width="1" height="2" fill="#d4d4d4"/><rect x="12" y="127" width="9" height="2" fill="#9cdcfe"/><rect x="21" y="127" width="6" height="2" fill="#d4d4d4"/><rect x="4" y="131" width="9" height="2" fill="#9cdcfe"/><rect x="14" y="131" width="1" height="2" fill="#d4d4d4"/><rect x="16" y="131" width="2" height="2" fill="#d4d4d4"/><rect x="4" y="133" width="9" height="2" fill="#9cdcfe"/><rect x="14" y="133" width="1" height="2" fill="#d4d4d4"/><rect x="16" y="133" width="7" height="2" fill="#9cdcfe"/><rect x="23" y="133" width="3" height="2" fill="#d4d4d4"/><rect x="4" y="135" width="7" height="2" fill="#9cdcfe"/><rect x="12" y="135" width="1" height="2" fill="#d4d4d4"/><rect x="14" y="135" width="10" height="2" fill="#ce9178"/><rect x="25" y="135" width="1" height="2" fill="#d4d4d4"/><rect x="27" y="135" width="9" height="2" fill="#9cdcfe"/><rect x="8" y="137" width="9" height="2" fill="#9cdcfe"/><rect x="18" y="137" width="1" height="2" fill="#d4d4d4"/><rect x="20" y="137" width="21" height="2" fill="#dcdcaa"/><rect x="42" y="137" width="7" height="2" fill="#d4d4d4"/><rect x="50" y="137" width="3" height="2" fill="#d4d4d4"/><rect x="54" y="137" width="4" height="2" fill="#d4d4d4"/><rect x="59" y="137" width="12" height="2" fill="#9cdcfe"/><rect x="4" y="139" width="1" height="2" fill="#d4d4d4"/><rect x="0" y="141" width="1" height="2" fill="#d4d4d4"/><rect x="0" y="143" width="7" height="2" fill="#9cdcfe"/><rect x="8" y="143" width="1" height="2" fill="#d4d4d4"/><rect x="10" y="143" width="21" height="2" fill="#dcdcaa"/><rect x="32" y="143" width="7" height="2" fill="#d4d4d4"/><rect x="40" y="143" width="3" height="2" fill="#d4d4d4"/><rect x="44" y="143" width="4" height="2" fill="#d4d4d4"/><rect x="49" y="143" width="13" height="2" fill="#9cdcfe"/><rect x="0" y="145" width="11" height="2" fill="#9cdcfe"/><rect x="12" y="145" width="1" height="2" fill="#d4d4d4"/><rect x="14" y="145" width="7" height="2" fill="#9cdcfe"/><rect x="22" y="145" width="1" height="2" fill="#d4d4d4"/><rect x="24" y="145" width="14" height="2" fill="#dcdcaa"/><rect x="39" y="145" width="6" height="2" fill="#d4d4d4"/><rect x="46" y="145" width="2" height="2" fill="#d4d4d4"/><rect x="0" y="147" width="5" height="2" fill="#9cdcfe"/><rect x="6" y="147" width="1" height="2" fill="#d4d4d4"/><rect x="8" y="147" width="7" height="2" fill="#9cdcfe"/><rect x="15" y="147" width="12" height="2" fill="#d4d4d4"/><rect x="0" y="149" width="11" height="2" fill="#9cdcfe"/><rect x="12" y="149" width="1" height="2" fill="#d4d4d4"/><rect x="14" y="149" width="8" height="2" fill="#dcdcaa"/><rect x="23" y="149" width="9" height="2" fill="#d4d4d4"/><rect x="33" y="149" width="1" height="2" fill="#ce9178"/><rect x="34" y="149" width="5" height="2" fill="#9cdcfe"/><rect x="39" y="149" width="1" height="2" fill="#ce9178"/><rect x="40" y="149" width="5" height="2" fill="#9cdcfe"/><rect x="45" y="149" width="6" height="2" fill="#ce9178"/><rect x="52" y="149" width="9" height="2" fill="#d4d4d4"/><rect x="62" y="149" width="4" height="2" fill="#d4d4d4"/><rect x="0" y="151" width="10" height="2" fill="#dcdcaa"/><rect x="11" y="151" width="16" height="2" fill="#d4d4d4"/><rect x="28" y="151" width="6" height="2" fill="#d4d4d4"/><rect x="35" y="151" width="9" height="2" fill="#ce9178"/><rect x="45" y="151" width="5" height="2" fill="#9cdcfe"/><rect x="51" y="151" width="13" height="2" fill="#ce9178"/><rect x="0" y="153" width="1" height="2" fill="#d4d4d4"/><rect x="0" y="159" width="1" height="2" fill="#52773f"/><rect x="2" y="159" width="10" height="2" fill="#52773f"/><rect x="13" y="159" width="8" height="2" fill="#52773f"/><rect x="0" y="161" width="5" height="2" fill="#9cdcfe"/><rect x="6" y="161" width="1" height="2" fill="#d4d4d4"/><rect x="8" y="161" width="29" height="2" fill="#ce9178"/><rect x="0" y="163" width="8" height="2" fill="#dcdcaa"/><rect x="9" y="163" width="5" height="2" fill="#d4d4d4"/><rect x="15" y="163" width="5" height="2" fill="#9cdcfe"/><rect x="21" y="163" width="9" height="2" fill="#d4d4d4"/><rect x="31" y="163" width="9" height="2" fill="#d4d4d4"/><rect x="41" y="163" width="6" height="2" fill="#d4d4d4"/><rect x="0" y="165" width="10" height="2" fill="#dcdcaa"/><rect x="11" y="165" width="16" height="2" fill="#d4d4d4"/><rect x="28" y="165" width="5" height="2" fill="#d4d4d4"/><rect x="34" y="165" width="10" height="2" fill="#ce9178"/><rect x="45" y="165" width="10" height="2" fill="#ce9178"/><rect x="56" y="165" width="8" height="2" fill="#ce9178"/><rect x="65" y="165" width="2" height="2" fill="#ce9178"/><rect x="68" y="165" width="5" height="2" fill="#9cdcfe"/><rect x="73" y="165" width="1" height="2" fill="#ce9178"/><rect x="0" y="167" width="4" height="2" fill="#9cdcfe"/><rect x="5" y="167" width="1" height="2" fill="#d4d4d4"/><rect x="7" y="167" width="77" height="2" fill="#ce9178"/><rect x="0" y="169" width="9" height="2" fill="#9cdcfe"/><rect x="10" y="169" width="1" height="2" fill="#d4d4d4"/><rect x="12" y="169" width="21" height="2" fill="#dcdcaa"/><rect x="34" y="169" width="7" height="2" fill="#d4d4d4"/><rect x="42" y="169" width="3" height="2" fill="#d4d4d4"/><rect x="46" y="169" width="4" height="2" fill="#d4d4d4"/><rect x="51" y="169" width="4" height="2" fill="#9cdcfe"/><rect x="0" y="171" width="10" height="2" fill="#9cdcfe"/><rect x="11" y="171" width="1" height="2" fill="#d4d4d4"/><rect x="13" y="171" width="9" height="2" fill="#9cdcfe"/><rect x="22" y="171" width="9" height="2" fill="#d4d4d4"/><rect x="0" y="173" width="7" height="2" fill="#d4d4d4"/><rect x="8" y="173" width="1" height="2" fill="#d4d4d4"/><rect x="9" y="173" width="9" height="2" fill="#9cdcfe"/><rect x="19" y="173" width="2" height="2" fill="#d4d4d4"/><rect x="22" y="173" width="10" height="2" fill="#9cdcfe"/><rect x="32" y="173" width="1" height="2" fill="#d4d4d4"/><rect x="34" y="173" width="1" height="2" fill="#d4d4d4"/><rect x="0" y="175" width="7" height="2" fill="#9cdcfe"/><rect x="8" y="175" width="1" height="2" fill="#d4d4d4"/><rect x="10" y="175" width="21" height="2" fill="#dcdcaa"/><rect x="32" y="175" width="7" height="2" fill="#d4d4d4"/><rect x="40" y="175" width="3" height="2" fill="#d4d4d4"/><rect x="44" y="175" width="4" height="2" fill="#d4d4d4"/><rect x="49" y="175" width="13" height="2" fill="#9cdcfe"/><rect x="0" y="177" width="11" height="2" fill="#9cdcfe"/><rect x="12" y="177" width="1" height="2" fill="#d4d4d4"/><rect x="14" y="177" width="7" height="2" fill="#9cdcfe"/><rect x="22" y="177" width="1" height="2" fill="#d4d4d4"/><rect x="24" y="177" width="14" height="2" fill="#dcdcaa"/><rect x="39" y="177" width="6" height="2" fill="#d4d4d4"/><rect x="46" y="177" width="2" height="2" fill="#d4d4d4"/><rect x="0" y="179" width="5" height="2" fill="#9cdcfe"/><rect x="6" y="179" width="1" height="2" fill="#d4d4d4"/><rect x="8" y="179" width="7" height="2" fill="#9cdcfe"/><rect x="15" y="179" width="12" height="2" fill="#d4d4d4"/><rect x="0" y="181" width="11" height="2" fill="#9cdcfe"/><rect x="12" y="181" width="1" height="2" fill="#d4d4d4"/><rect x="14" y="181" width="8" height="2" fill="#dcdcaa"/><rect x="23" y="181" width="9" height="2" fill="#d4d4d4"/><rect x="33" y="181" width="1" height="2" fill="#ce9178"/><rect x="34" y="181" width="5" height="2" fill="#9cdcfe"/><rect x="39" y="181" width="1" height="2" fill="#ce9178"/><rect x="40" y="181" width="5" height="2" fill="#9cdcfe"/><rect x="45" y="181" width="6" height="2" fill="#ce9178"/><rect x="52" y="181" width="9" height="2" fill="#d4d4d4"/><rect x="62" y="181" width="4" height="2" fill="#d4d4d4"/><rect x="0" y="183" width="10" height="2" fill="#dcdcaa"/><rect x="11" y="183" width="16" height="2" fill="#d4d4d4"/><rect x="28" y="183" width="6" height="2" fill="#d4d4d4"/><rect x="35" y="183" width="9" height="2" fill="#ce9178"/><rect x="45" y="183" width="5" height="2" fill="#9cdcfe"/><rect x="51" y="183" width="13" height="2" fill="#ce9178"/><rect x="0" y="185" width="1" height="2" fill="#d4d4d4"/><rect x="0" y="189" width="1" height="2" fill="#52773f"/><rect x="2" y="189" width="3" height="2" fill="#52773f"/><rect x="6" y="189" width="13" height="2" fill="#52773f"/><rect x="20" y="189" width="8" height="2" fill="#52773f"/><rect x="0" y="191" width="5" height="2" fill="#9cdcfe"/><rect x="6" y="191" width="1" height="2" fill="#d4d4d4"/><rect x="8" y="191" width="29" height="2" fill="#ce9178"/><rect x="0" y="193" width="8" height="2" fill="#dcdcaa"/><rect x="9" y="193" width="5" height="2" fill="#d4d4d4"/><rect x="15" y="193" width="5" height="2" fill="#9cdcfe"/><rect x="21" y="193" width="9" height="2" fill="#d4d4d4"/><rect x="31" y="193" width="9" height="2" fill="#d4d4d4"/><rect x="41" y="193" width="6" height="2" fill="#d4d4d4"/><rect x="0" y="195" width="10" height="2" fill="#dcdcaa"/><rect x="11" y="195" width="16" height="2" fill="#d4d4d4"/><rect x="28" y="195" width="5" height="2" fill="#d4d4d4"/><rect x="34" y="195" width="10" height="2" fill="#ce9178"/><rect x="45" y="195" width="3" height="2" fill="#ce9178"/><rect x="49" y="195" width="13" height="2" fill="#ce9178"/><rect x="63" y="195" width="8" height="2" fill="#ce9178"/><rect x="72" y="195" width="2" height="2" fill="#ce9178"/><rect x="75" y="195" width="5" height="2" fill="#9cdcfe"/><rect x="80" y="195" width="1" height="2" fill="#ce9178"/><rect x="0" y="197" width="4" height="2" fill="#9cdcfe"/><rect x="5" y="197" width="1" height="2" fill="#d4d4d4"/><rect x="7" y="197" width="79" height="2" fill="#ce9178"/><rect x="0" y="199" width="9" height="2" fill="#9cdcfe"/><rect x="10" y="199" width="1" height="2" fill="#d4d4d4"/><rect x="12" y="199" width="21" height="2" fill="#dcdcaa"/><rect x="34" y="199" width="7" height="2" fill="#d4d4d4"/><rect x="42" y="199" width="3" height="2" fill="#d4d4d4"/><rect x="46" y="199" width="4" height="2" fill="#d4d4d4"/><rect x="51" y="199" width="4" height="2" fill="#9cdcfe"/><rect x="0" y="201" width="10" height="2" fill="#9cdcfe"/><rect x="11" y="201" width="1" height="2" fill="#d4d4d4"/><rect x="13" y="201" width="9" height="2" fill="#9cdcfe"/><rect x="22" y="201" width="9" height="2" fill="#d4d4d4"/><rect x="0" y="203" width="7" height="2" fill="#d4d4d4"/><rect x="8" y="203" width="1" height="2" fill="#d4d4d4"/><rect x="9" y="203" width="9" height="2" fill="#9cdcfe"/><rect x="19" y="203" width="2" height="2" fill="#d4d4d4"/><rect x="22" y="203" width="10" height="2" fill="#9cdcfe"/><rect x="32" y="203" width="1" height="2" fill="#d4d4d4"/><rect x="34" y="203" width="1" height="2" fill="#d4d4d4"/><rect x="0" y="205" width="7" height="2" fill="#9cdcfe"/><rect x="8" y="205" width="1" height="2" fill="#d4d4d4"/><rect x="10" y="205" width="21" height="2" fill="#dcdcaa"/><rect x="32" y="205" width="7" height="2" fill="#d4d4d4"/><rect x="40" y="205" width="3" height="2" fill="#d4d4d4"/><rect x="44" y="205" width="4" height="2" fill="#d4d4d4"/><rect x="49" y="205" width="13" height="2" fill="#9cdcfe"/><rect x="0" y="207" width="11" height="2" fill="#9cdcfe"/><rect x="12" y="207" width="1" height="2" fill="#d4d4d4"/><rect x="14" y="207" width="7" height="2" fill="#9cdcfe"/><rect x="22" y="207" width="1" height="2" fill="#d4d4d4"/><rect x="24" y="207" width="14" height="2" fill="#dcdcaa"/><rect x="39" y="207" width="6" height="2" fill="#d4d4d4"/><rect x="46" y="207" width="2" height="2" fill="#d4d4d4"/><rect x="0" y="209" width="5" height="2" fill="#9cdcfe"/><rect x="6" y="209" width="1" height="2" fill="#d4d4d4"/><rect x="8" y="209" width="7" height="2" fill="#9cdcfe"/><rect x="15" y="209" width="12" height="2" fill="#d4d4d4"/><rect x="0" y="211" width="11" height="2" fill="#9cdcfe"/><rect x="12" y="211" width="1" height="2" fill="#d4d4d4"/><rect x="14" y="211" width="8" height="2" fill="#dcdcaa"/><rect x="23" y="211" width="9" height="2" fill="#d4d4d4"/><rect x="33" y="211" width="1" height="2" fill="#ce9178"/><rect x="34" y="211" width="5" height="2" fill="#9cdcfe"/><rect x="39" y="211" width="1" height="2" fill="#ce9178"/><rect x="40" y="211" width="5" height="2" fill="#9cdcfe"/><rect x="45" y="211" width="6" height="2" fill="#ce9178"/><rect x="52" y="211" width="9" height="2" fill="#d4d4d4"/><rect x="62" y="211" width="4" height="2" fill="#d4d4d4"/><rect x="0" y="213" width="10" height="2" fill="#dcdcaa"/><rect x="11" y="213" width="16" height="2" fill="#d4d4d4"/><rect x="28" y="213" width="6" height="2" fill="#d4d4d4"/><rect x="35" y="213" width="9" height="2" fill="#ce9178"/><rect x="45" y="213" width="5" height="2" fill="#9cdcfe"/><rect x="51" y="213" width="13" height="2" fill="#ce9178"/><rect x="0" y="215" width="1" height="2" fill="#d4d4d4"/><rect x="0" y="217" width="15" height="2" fill="#dcdcaa"/><rect x="0" y="219" width="18" height="2" fill="#dcdcaa"/></g><rect x="0" y="0" width="120" height="230" fill="url(#tx)"/></svg>
<div class="abs" style="left:1138px;top:0;width:11px;height:314px;border-left:1px solid #121212;border-top:1px solid #151515"></div>
<div class="abs" style="left:1139px;top:271px;width:10px;height:2px;background:#a0a0a0"></div>
<div class="ln" style="top:-4px">97</div><div class="cl" style="top:-4px"><span class="f">New-Item</span> -Path <span class="v">$path</span> -ItemType Directory -Force</div>
<div class="ln" style="top:15px">98</div><div class="cl" style="top:15px"><span class="f">Write-Host</span> -ForegroundColor Green <span class="s">"Exporting App Configuration Policies to </span><span class="v">$path</span><span class="s">"</span></div>
<div class="ln" style="top:34px">99</div><div class="cl" style="top:34px"><span class="v">$uri</span> = <span class="s">"<span class="lk">https://graph.microsoft.com/beta/deviceAppManagement/mobileAppConfigurations/</span>"</span></div>
<div class="ln" style="top:53px">100</div><div class="cl" style="top:53px"><span class="v">$response</span> = <span class="f">Invoke-MgGraphRequest</span> -Method GET -Uri <span class="v">$uri</span></div>
<div class="ln" style="top:72px">101</div><div class="cl" style="top:72px"><span class="v">$policyIds</span> = <span class="v">$response</span>.value.id</div>
<div class="ln" style="top:91px">102</div><div class="cl" style="top:91px">Foreach <span class="b">(</span><span class="v">$policyId</span> in <span class="v">$PolicyIds</span><span class="b">)</span> <span class="b">{</span></div>
<div class="ln" style="top:110px">103</div><div class="cl" style="top:110px"><span class="v">$policy</span> = <span class="f">Invoke-MgGraphRequest</span> -Method GET -URI <span class="v">$uri$policyId</span></div>
<div class="ln" style="top:129px">104</div><div class="cl" style="top:129px"><span class="v">$policyjson</span> = <span class="v">$policy</span> | <span class="f">ConvertTo-Json</span> -Depth 10</div>
<div class="ln" style="top:148px">105</div><div class="cl" style="top:148px"><span class="v">$name</span> = <span class="v">$policy</span>.displayname</div>
<div class="ln" style="top:167px">106</div><div class="cl" style="top:167px"><span class="v">$policyJson</span> | <span class="f">Out-File</span> -FilePath <span class="s">"</span><span class="v">$path</span><span class="s">\</span><span class="v">$name</span><span class="s">.json"</span> -Encoding utf8</div>
<div class="ln" style="top:186px">107</div><div class="cl" style="top:186px"><span class="f">write-host</span> -ForegroundColor yellow <span class="s">"Exported </span><span class="v">$name</span><span class="s"> successfully"</span></div>
<div class="ln" style="top:205px">108</div><div class="cl" style="top:205px"><span class="b">}</span></div>
<div class="ln" style="top:224px">109</div><div class="cl" style="top:224px"><span class="f">Stop-Transcript</span></div>
<div class="ln cur" style="top:243px">110</div><div class="cl" style="top:243px"><span class="f">Disconnect-MgGraph</span></div>
</div>
<div id="panel" class="abs">
  <div class="pt" style="left:19px" id="p1">PROBLEMS</div>
  <div class="pt" style="left:97px" id="p2">OUTPUT</div>
  <div class="pt" style="left:162px" id="p3">DEBUG CONSOLE</div>
  <div class="pt" style="left:271px;color:#e7e7e7" id="p4">TERMINAL</div>
  <div class="pt" style="left:346px" id="p5">PORTS</div>
  <div class="pt" style="left:402px" id="p6">GITLENS</div>
  <div class="pt" style="left:468px" id="p7">COMMENTS</div>

  <div id="tul" class="abs" style="left:269px;top:28px;width:56px;height:1px;background:#0078d4"></div>
  <!-- panel actions -->
  <svg style="left:1030px;top:10px" width="14" height="14" viewBox="0 0 14 14" stroke="#cccccc" stroke-width="1.1"><g transform="translate(0.5 0.5)"><path d="M7 0.2V13.8M0.2 7H13.8"/></g></svg>
  <svg style="left:1050px;top:16px" width="8" height="5" viewBox="0 0 8 5" fill="none" stroke="#cccccc" stroke-width="1.1"><path d="M0.4 0.4L4 4.2L7.6 0.4"/></svg>
  <svg style="left:1070px;top:16px" width="14" height="4" viewBox="0 0 14 4" fill="#cccccc"><circle cx="2" cy="2" r="1.1"/><circle cx="7" cy="2" r="1.1"/><circle cx="12" cy="2" r="1.1"/></svg>
  <svg style="left:1098px;top:14px" width="11" height="6" viewBox="0 0 11 6" fill="none" stroke="#cccccc" stroke-width="1.2"><path d="M0.4 5.6L5.5 0.6L10.6 5.6"/></svg>
  <svg style="left:1124px;top:12px" width="10" height="9" viewBox="0 0 10 9" fill="none" stroke="#cccccc" stroke-width="1.2"><g transform="translate(0.0 0.5)"><path d="M0.5 0.3L9.5 8.7M9.5 0.3L0.5 8.7"/></g></svg>
  <!-- terminal decorations -->
  <svg style="left:5px;top:76px" width="9" height="9" viewBox="0 0 9 9" fill="none" stroke="#636363" stroke-width="1.6"><g transform="translate(0.0 0.5)"><circle cx="4.5" cy="4.5" r="3.2"/></g></svg>
  <svg style="left:5px;top:93px" width="9" height="9" viewBox="0 0 9 9" fill="none" stroke="#636363" stroke-width="1.6"><g transform="translate(0.0 0.5)"><circle cx="4.5" cy="4.5" r="3.2"/></g></svg>
  <div id="blur" class="abs" style="left:0;top:195px"><i style="left:280px;background:#555655"></i><i style="left:291px;background:#3a3a38"></i><i style="left:302px;background:#545654"></i><i style="left:313px;background:#3a3c44"></i><i style="left:324px;background:#353535"></i><i style="left:346px;background:#6b6757"></i><i style="left:357px;background:#6b6b6b"></i><i style="left:368px;background:#1f1f1e"></i><i style="left:379px;background:#5c5c57"></i><i style="left:390px;background:#3c3c3e"></i><i style="left:401px;background:#5b463d"></i><i style="left:412px;background:#6f6a59"></i><i style="left:423px;background:#565757"></i><i style="left:434px;background:#6f6a57"></i><i style="left:445px;background:#333332"></i><i style="left:456px;background:#4a4a49"></i><i style="left:467px;background:#333332"></i><i style="left:478px;background:#5d616b"></i><i style="left:489px;background:#44535c"></i><i style="left:500px;background:#696969"></i><i style="left:511px;background:#55534e"></i><i style="left:522px;background:#414140"></i><b style="left:271.5px;top:0;width:8.5px;height:18.5px;background:#2a2a2a"></b></div>
  <!-- terminal scrollbar -->
  <div class="abs" style="left:1018px;top:39px;width:14px;height:390px;background:#141414;border-left:1px solid #0c0c0c;border-top:1px solid #0c0c0c"></div>
  <div class="abs" style="left:1019px;top:110px;width:13px;height:319px;background:#3d3d3e"></div>
  <div class="abs" style="left:1019px;top:131px;width:4px;height:12px;background:#6b6b6b"></div>
  <div class="abs" style="left:1019px;top:145px;width:4px;height:12px;background:#6b6b6b"></div>
  <!-- terminal list -->
  <div id="tlist" class="abs" style="left:1032px;top:34px;width:117px;height:395px;border-left:1px solid #2b2b2b">
    <div class="row" style="top:0"><svg width="16" height="15" viewBox="0 0 16 15" fill="none" stroke="#cccccc" stroke-width="1.1"><path d="M2.6 1H15.2L13.4 14H0.8Z"/><path d="M4.4 4.2L8.2 6.9L4.2 9.6M7.6 10.8H12" stroke-width="1.3"/></svg><span id="tl1">pwsh</span></div>
    <div class="row sel" style="top:22px"><svg width="16" height="15" viewBox="0 0 16 15" fill="none" stroke="#cccccc" stroke-width="1.1"><path d="M2.6 1H15.2L13.4 14H0.8Z"/><path d="M4.4 4.2L8.2 6.9L4.2 9.6M7.6 10.8H12" stroke-width="1.3"/></svg><span id="tl2">PowerShell ...</span></div>
  </div>
  <div id="term">
<div>PS C:\Users\gpnov&gt;</div>
<div>PS C:\Users\gpnov&gt; . 'C:\Github_Clone\MS-Cloud-Scripts\intune\Export Policies\Export-Intune-Policies.ps1'</div>
<div><span class="y">Checking for directory C:\temp for transcript and output files</span></div>
<div>Transcript started, output file is C:\Temp\PolicyExport.log</div>
<div><span class="y">Installing Required Modules if they're missing...</span></div>
<div><span class="y">Microsoft.Graph.Authentication module is already installed</span></div>
<div>Welcome to Microsoft Graph!</div>
<div></div>
<div>Connected via delegated access using</div>
<div>Readme: https://aka.ms/graph/sdk/powershell</div>
<div>SDK Docs: https://aka.ms/graph/sdk/powershell/docs</div>
<div>API Docs: https://aka.ms/graph/docs</div>
<div></div>
<div>NOTE: You can use the -NoWelcome parameter to suppress this message.</div>
<div></div>
<div></div>
<div>    Directory: C:\temp</div>
<div></div>
<div><span class="g">Mode                 LastWriteTime         <i>Length</i> Name</span></div>
<div><span class="g gd">----                 -------------         ------ ----</span></div>
<div>d----          12/12/2024  6:31 AM                <span class="sel">CA-Policies</span></div>
<div><span class="gn">Exporting Conditional Access Policies to C:\temp\CA-Policies</span></div>
</div>
  <div class="abs" style="left:280px;top:206px;width:44px;height:11.4px;background:#181818"></div>
  <div class="abs" style="left:280px;top:217.4px;width:44px;height:1px;background:#4d4d4d"></div>
</div>
</body>
</html>
